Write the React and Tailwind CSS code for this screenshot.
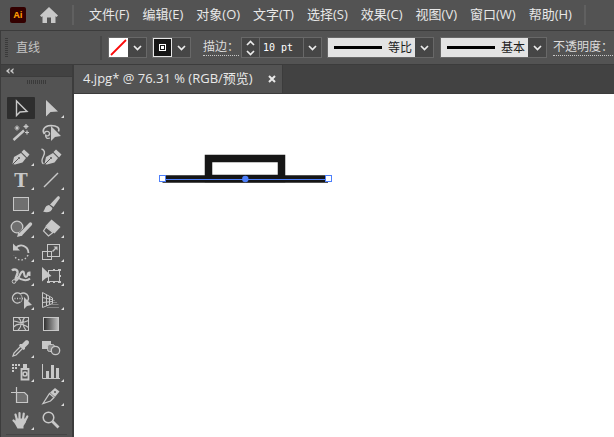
import React, { useState } from 'react'

const FG = '#c8c8c8'

const MENUS = [
  '文件(F)',
  '编辑(E)',
  '对象(O)',
  '文字(T)',
  '选择(S)',
  '效果(C)',
  '视图(V)',
  '窗口(W)',
  '帮助(H)'
]

// Nib shared by the pen and curvature tools
const Nib = () => (
  <>
    <path d="M6.5 20 L8 13 L15 9 L20 14 L16.5 18.5 L9 20.5 Z" fill={FG} stroke="none" />
    <path d="M15.5 8 L18 5.5 L23.5 10.5 L21 13.5 Z" fill={FG} stroke="none" />
    <path d="M7 20 L12.5 14.5" stroke="#535353" />
    <circle cx="13" cy="14" r="1" fill="#535353" stroke="none" />
  </>
)

// Every glyph is drawn on a 30x24 cell
const TOOLS = [
  { name: '选择工具', icon: <path d="M10.5 5 V19.5 L14 16 L21 15.5 Z" strokeWidth="1.4" /> },
  { name: '直接选择工具', more: true, icon: <path d="M10 4 V20.5 L14.5 16 L22 15.5 Z" fill={FG} stroke="none" /> },
  {
    name: '魔棒工具',
    icon: (
      <>
        <path d="M7.5 20 L18 10.5" strokeWidth="2.4" />
        <path d="M11 5.5 V10.5 M8.5 8 H13.5 M20 4 V9 M17.5 6.5 H22.5 M21 10.5 V14.5 M19 12.5 H23" strokeWidth="1.2" />
        <path d="M9.5 6.5 L12.5 9.5 M12.5 6.5 L9.5 9.5 M18.5 5 L21.5 8 M21.5 5 L18.5 8" strokeWidth="0.9" />
      </>
    )
  },
  {
    name: '套索工具',
    icon: (
      <>
        <path d="M8.5 14 C6 11 7 6 15 5.5 C21 5.5 24 8 22.5 11.5" strokeWidth="1.6" />
        <path d="M8.5 14 C8.5 11 12.5 10.5 13.5 13 C14 16 10 17 9.5 14.5 C9.5 18 11 19 14 18" strokeWidth="1.3" />
        <path d="M15 6 V21 L19 17 L25 16 Z" fill={FG} stroke="none" />
      </>
    )
  },
  { name: '钢笔工具', more: true, icon: <Nib /> },
  {
    name: '曲率工具',
    icon: (
      <>
        <g transform="translate(2 0)">
          <Nib />
        </g>
        <path d="M5.5 5 C9 6 9 9 7.5 12 C5.5 16 5 18.5 7.5 20" strokeWidth="1.4" />
      </>
    )
  },
  {
    name: '文字工具',
    more: true,
    icon: (
      <text x="15" y="19" textAnchor="middle" fontSize="18" fontWeight="700" fontFamily="'DejaVu Serif', serif" fill={FG} stroke="none">
        T
      </text>
    )
  },
  { name: '直线段工具', more: true, icon: <path d="M8 19 L22 5" strokeWidth="1.5" /> },
  { name: '矩形工具', more: true, icon: <rect x="7.5" y="5.5" width="15" height="13" fill="#707070" /> },
  {
    name: '画笔工具',
    more: true,
    icon: (
      <>
        <path d="M23 4 L24 6 L17.5 15 L14 12.5 L21.5 4.5 Z" fill={FG} stroke="none" />
        <path d="M13 13 L16.5 16 C16 20 11 21 7 19.5 C9 18.5 8.5 13.5 13 13 Z" fill={FG} stroke="none" />
      </>
    )
  },
  {
    name: 'Shaper 工具',
    more: true,
    icon: (
      <>
        <circle cx="11" cy="11" r="5.8" fill="#707070" strokeWidth="1.3" />
        <path d="M14 19 L25 7.5" strokeWidth="4.6" stroke="#535353" />
        <path d="M15 18 L24.5 8" strokeWidth="3.4" strokeLinecap="round" />
        <path d="M11 21 L12.5 16 L16.5 19.5 Z" fill={FG} stroke="none" />
      </>
    )
  },
  {
    name: '橡皮擦工具',
    more: true,
    icon: (
      <>
        <path d="M15.5 3.5 L24.5 11 L18.5 17.5 L9.5 10 Z" fill={FG} stroke="none" />
        <path d="M10 11 L7.5 15 L12.5 20 L17 16.5 Z" strokeWidth="1.2" />
      </>
    )
  },
  {
    name: '旋转工具',
    more: true,
    icon: (
      <>
        <path d="M9.5 8.5 C14 3 22 5.5 22.5 13" strokeWidth="1.8" />
        <path d="M7 3.5 V10.5 H14 Z" fill={FG} stroke="none" />
        <path d="M22 15 C19 21.5 11 21.5 8 15.5" strokeWidth="1.5" strokeDasharray="1.5 2" />
      </>
    )
  },
  {
    name: '比例缩放工具',
    more: true,
    icon: (
      <>
        <rect x="11.5" y="4.5" width="12" height="12" />
        <rect x="6.5" y="11.5" width="9" height="8" />
        <path d="M16.5 11.5 L20 8" strokeWidth="1.4" />
        <path d="M17.5 6.5 H21.5 V10.5 Z" fill={FG} stroke="none" />
      </>
    )
  },
  {
    name: '宽度工具',
    more: true,
    icon: (
      <>
        <path d="M6 6.5 C8 4.5 12 5.5 11.5 9 C11 12 9 14 9.5 16" strokeWidth="2.4" />
        <path d="M10 16.5 C13 16 13.5 8.5 16.5 7.5 C19 7 17 12.5 20 13 C22.5 13 20.5 8.5 23.5 8.5 V12" strokeWidth="2" />
        <path d="M12 13.5 C15 16 21 17.5 24 14.5" strokeWidth="2" />
        <circle cx="8" cy="17.5" r="1.8" fill="#535353" />
        <path d="M9 16 L15 10" />
      </>
    )
  },
  {
    name: '自由变换工具',
    more: true,
    icon: (
      <>
        <rect x="12.5" y="6.5" width="11" height="11" />
        <path
          d="M17 5 h2 v2 h-2 z M22 5 h3 v2 h-3 z M23 11 h2 v2 h-2 z M22 17 h3 v2 h-3 z M17 17 h2 v2 h-2 z M11 17 h3 v2 h-3 z"
          fill={FG}
          stroke="none"
        />
        <path d="M6 3 V17.5 L10 14 L15.5 12 Z" fill={FG} stroke="none" />
      </>
    )
  },
  {
    name: '形状生成器工具',
    more: true,
    icon: (
      <>
        <path d="M14.5 14 A5 5 0 1 1 14.5 6 A5 5 0 1 1 18 15" strokeWidth="1.4" />
        <path d="M15 7 C16.5 9 16.5 12 15 14" strokeWidth="0.8" />
        <path d="M8.5 10.5 H19" strokeDasharray="1 1.5" strokeWidth="1.5" />
        <path d="M18 9 V21 L21 18 L26 17 Z" fill={FG} stroke="none" />
      </>
    )
  },
  {
    name: '透视网格工具',
    more: true,
    icon: (
      <>
        <path d="M6.5 4.5 V19.5 L16.5 15.5 V10 Z M6.5 9.5 L16 11.5 M6.5 14.5 L16 13.5 M10.5 6.5 V18 M13.5 8.5 V16.5" />
        <path d="M17 12.5 H19 M17 14.5 H21" stroke="#858585" />
        <path d="M16 16.5 H22.5 M11 19.5 H23" stroke="#858585" />
      </>
    )
  },
  {
    name: '网格工具',
    icon: (
      <>
        <rect x="7.5" y="5.5" width="15" height="13" />
        <path
          d="M12.5 5.5 C16 9 16 14 12 18.5 M18.5 5.5 C15.5 9 17 14 20 18.5 M7.5 9 C12 9 13 13 22.5 8.5 M7.5 15 C11 11 16 11 22.5 15.5"
          strokeWidth="1.2"
        />
      </>
    )
  },
  {
    name: '渐变工具',
    icon: (
      <>
        <linearGradient id="toolGradient">
          <stop offset="0" stopColor="#2c2c2c" />
          <stop offset="1" stopColor="#c4c4c4" />
        </linearGradient>
        <rect x="7.5" y="5.5" width="15" height="13" fill="url(#toolGradient)" />
      </>
    )
  },
  {
    name: '吸管工具',
    more: true,
    icon: (
      <>
        <path d="M7 20 L8 17 L15.5 9.5 L17.5 11.5 L10 19 Z" strokeWidth="1.3" />
        <path d="M14 8 L16 8 L19.5 4.5 C22 3.5 24 5.5 22.5 8 L19 11.5 L19 13 L17.5 14 L13 9.5 Z" fill={FG} stroke="none" />
      </>
    )
  },
  {
    name: '混合工具',
    icon: (
      <>
        <rect x="6" y="5" width="9" height="8" fill={FG} stroke="none" />
        <rect x="11.5" y="8.5" width="7" height="7" rx="2" fill="#858585" />
        <circle cx="19.5" cy="14.5" r="4.2" fill="#5d5d5d" strokeWidth="1.3" />
      </>
    )
  },
  {
    name: '符号喷枪工具',
    more: true,
    icon: (
      <>
        <path
          d="M6 4 h2 v2 h-2 z M9 4 h2 v2 h-2 z M12 4 h2 v2 h-2 z M6 7 h2 v2 h-2 z M9 7 h2 v2 h-2 z M6 10 h2 v2 h-2 z M17 4 h4 v4 h-4 z"
          fill={FG}
          stroke="none"
        />
        <path d="M15.5 9 H22.5 V19.5 H15.5 Z" strokeWidth="1.8" />
        <circle cx="19" cy="14" r="2" strokeWidth="1.6" />
      </>
    )
  },
  {
    name: '柱形图工具',
    more: true,
    icon: (
      <>
        <path d="M6.5 4 V18.5 H24" />
        <path d="M10 11 h3 v7 h-3 z M15 5 h3 v13 h-3 z M20 8 h3 v10 h-3 z" fill={FG} stroke="none" />
      </>
    )
  },
  {
    name: '画板工具',
    icon: (
      <>
        <path d="M10.5 8.5 H18.5 L21.5 11.5 V18.5 H10.5 Z" fill="#707070" strokeWidth="1.2" />
        <path d="M5 8.5 H10 M10.5 3 V8" strokeWidth="1.2" />
      </>
    )
  },
  {
    name: '切片工具',
    more: true,
    icon: (
      <>
        <path d="M7 19.5 L13.5 9.5 L18 13.5 L14.5 17 Z" strokeWidth="1.3" />
        <path d="M14 8.5 L19 4 L23.5 7.5 L19 13 Z" fill={FG} stroke="none" />
        <circle cx="19" cy="8" r="1" fill="#535353" stroke="none" />
      </>
    )
  },
  {
    name: '抓手工具',
    more: true,
    icon: (
      <>
        <path d="M11 12 L9.5 6.5 M13.5 11 L13.5 5 M17 11 L17.8 5.5 M19 13 L21.3 8.5 M11.5 16.5 L7.5 12.5" strokeWidth="2.2" strokeLinecap="round" />
        <path d="M10 10.5 H19.5 L20 14 L17.5 18 V20.5 H11.5 L8.5 15 Z" fill={FG} stroke="none" />
      </>
    )
  },
  {
    name: '缩放工具',
    icon: (
      <>
        <circle cx="12.5" cy="9.5" r="5.3" strokeWidth="1.5" />
        <path d="M16.5 13.5 L22.5 19.5" strokeWidth="2.8" />
      </>
    )
  }
]

function Chevron({ up }) {
  return (
    <svg width="9" height="6" viewBox="0 0 9 6" fill="none" stroke="#ececec" strokeWidth="1.7" aria-hidden="true">
      <path d={up ? 'M1 5 L4.5 1.5 L8 5' : 'M1 1 L4.5 4.5 L8 1'} />
    </svg>
  )
}

function Swatch({ label, children }) {
  return (
    <div className="flex h-[21px] shrink-0 border border-[#686868] bg-[#464646]">
      <button aria-label={label} className="flex w-[19px] items-center justify-center">
        {children}
      </button>
      <button aria-label={`${label}选项`} className="flex w-[18px] items-center justify-center">
        <Chevron />
      </button>
    </div>
  )
}

// Drop-down with a sample of the stroke in front of its value
function StrokeSelect({ label, value, options }) {
  return (
    <div className="relative flex h-[21px] w-[107px] shrink-0 border border-[#686868] bg-[#464646]">
      <select
        aria-label={label}
        defaultValue={value}
        className="w-full appearance-none bg-transparent bg-linear-to-r from-[#e3e3e3] from-[87px] to-[#464646] to-[87px] pl-[60px] text-xs text-[#1c1c1c] outline-none"
      >
        {options.map((option) => (
          <option key={option}>{option}</option>
        ))}
      </select>
      <span className="pointer-events-none absolute top-2 left-1.5 h-[3px] w-12 bg-black" />
      <span className="pointer-events-none absolute inset-y-0 right-0 flex w-[18px] items-center justify-center">
        <Chevron />
      </span>
    </div>
  )
}

function MenuBar() {
  return (
    <header className="flex h-[30px] shrink-0 items-center overflow-hidden">
      <svg className="ml-2.5 shrink-0" width="16" height="16" viewBox="0 0 16 16" role="img" aria-label="Ai">
        <rect width="16" height="16" rx="2" fill="#330000" />
        <text x="8" y="11" textAnchor="middle" fontSize="9" fontWeight="700" fontFamily="'Open Sans', sans-serif" fill="#ff9a00">
          Ai
        </text>
      </svg>
      <button aria-label="主页" className="ml-3.5 shrink-0">
        <svg width="18" height="16" viewBox="0 0 18 16" fill="#c8c8c8">
          <path d="M9 0 L18 8.5 L16.5 10 L15.5 9.2 V16 H11 V10.5 H7 V16 H2.5 V9.2 L1.5 10 L0 8.5 Z" />
        </svg>
      </button>
      <span className="ml-3.5 h-5 w-0.5 shrink-0 bg-[#606060]" />
      <nav className="ml-[15px] flex shrink-0 gap-[13px] text-[13px] text-[#e8e8e8]">
        {MENUS.map((menu) => (
          <button key={menu} className="whitespace-nowrap">
            {menu}
          </button>
        ))}
      </nav>
      <span className="ml-3 h-5 w-0.5 shrink-0 bg-[#606060]" />
    </header>
  )
}

function ControlBar() {
  const [weight, setWeight] = useState('10 pt')

  const step = (delta) => setWeight((prev) => `${Math.max(0, parseFloat(prev) + delta)} pt`)

  return (
    <div className="flex h-[35px] shrink-0 items-center overflow-hidden border-y border-l border-[#3c3c3c] text-xs whitespace-nowrap text-[#dcdcdc]">
      <span className="ml-1 h-5 w-[3px] shrink-0 bg-[repeating-linear-gradient(#3a3a3a_0_1px,#535353_1px_2px)]" />
      <span className="ml-2 w-[84px] shrink-0 text-[#c4c4c4]">直线</span>
      <span className="mr-1.5 h-6 w-0.5 shrink-0 bg-[#484848]" />

      <div className="flex shrink-0 gap-[5px]">
        <Swatch label="填色">
          <svg width="19" height="19" viewBox="0 0 19 19">
            <rect width="19" height="19" fill="#fff" />
            <path d="M2 17 L17 2" stroke="#fb0a0a" strokeWidth="1.8" />
          </svg>
        </Swatch>
        <Swatch label="描边颜色">
          <svg width="19" height="19" viewBox="0 0 19 19" shapeRendering="crispEdges">
            <rect x="0.5" y="0.5" width="18" height="18" fill="#161616" stroke="#e6e6e6" />
            <rect x="6.5" y="6.5" width="6" height="6" fill="none" stroke="#fff" />
            <rect x="8" y="8" width="3" height="3" fill="#fff" />
          </svg>
        </Swatch>
      </div>

      <label htmlFor="stroke-weight" className="ml-3 shrink-0 border-b border-dotted border-[#c8c8c8] leading-4">
        描边：
      </label>
      <div className="ml-0.5 flex h-[21px] shrink-0 border border-[#686868] bg-[#464646]">
        <div className="flex w-[18px] flex-col items-center justify-center gap-1 border-r border-[#686868]">
          <button aria-label="增加" onClick={() => step(1)}>
            <Chevron up />
          </button>
          <button aria-label="减少" onClick={() => step(-1)}>
            <Chevron />
          </button>
        </div>
        <input
          id="stroke-weight"
          value={weight}
          onChange={(e) => setWeight(e.target.value)}
          className="w-11 border-r border-[#686868] bg-transparent px-[3px] font-['DejaVu_Sans_Mono',monospace] text-[10px] text-white outline-none"
        />
        <button aria-label="描边粗细选项" className="flex w-[17px] items-center justify-center">
          <Chevron />
        </button>
      </div>

      <div className="ml-[5px] flex shrink-0 gap-1.5">
        <StrokeSelect label="变量宽度配置文件" value="等比" options={['等比', '宽度 1']} />
        <StrokeSelect label="画笔定义" value="基本" options={['基本', '炭笔']} />
      </div>
      <button className="ml-1.5 shrink-0 border-b border-dotted border-[#c8c8c8] leading-4">不透明度：</button>
    </div>
  )
}

function Toolbox() {
  const [active, setActive] = useState('选择工具')

  return (
    <aside className="w-[74px] shrink-0 border-r-2 border-l border-[#3c3c3c]">
      <div className="flex h-3 items-center border-b border-[#3c3c3c] bg-[#424242] pl-[5px]">
        <button aria-label="折叠">
          <svg width="8" height="6" viewBox="0 0 8 6" fill="#c8c8c8">
            <path d="M3.5 0 V2 L2.2 3 L3.5 4 V6 L0 3 Z M7.5 0 V2 L6.2 3 L7.5 4 V6 L4 3 Z" />
          </svg>
        </button>
      </div>
      <div className="flex h-[19px] justify-center pt-[3px]">
        <span className="h-1 w-[19px] bg-[repeating-linear-gradient(90deg,#3a3a3a_0_1px,#535353_1px_2px)]" />
      </div>
      <div className="grid grid-cols-[30px_30px] pl-[5px]">
        {TOOLS.map((tool) => (
          <button key={tool.name} title={tool.name} aria-pressed={active === tool.name} onClick={() => setActive(tool.name)} className="h-6 w-[30px]">
            <svg width="30" height="24" viewBox="0 0 30 24" fill="none" stroke={FG}>
              {active === tool.name && <rect x="1" y="1" width="28" height="22" rx="1" fill="#2e2e2e" stroke="none" />}
              {tool.icon}
              {tool.more && <path d="M28 19 V22 H25 Z" fill="#dcdcdc" stroke="none" />}
            </svg>
          </button>
        ))}
      </div>
      <hr className="mx-[5px] mt-0.5 border-[#454545]" />
    </aside>
  )
}

// Open document: a frame with the selected 10 pt line over it
function Artwork() {
  return (
    <svg className="mt-[58px] ml-[84px]" width="176" height="34" viewBox="158 152 176 34" fill="none">
      <rect x="208.5" y="158.5" width="73" height="20" stroke="#161616" strokeWidth="7.5" />
      <path d="M162.5 179 H328" stroke="#161616" strokeWidth="7.5" />
      <path d="M165 179.5 H326" stroke="#4d7ffb" />
      <circle cx="245.3" cy="179" r="3.2" fill="#4d7ffb" />
      <rect x="159.5" y="175.5" width="6" height="6" fill="#fff" stroke="#4d7ffb" />
      <rect x="325.5" y="175.5" width="6" height="6" fill="#fff" stroke="#4d7ffb" />
    </svg>
  )
}

function App() {
  return (
    <div className="flex min-h-screen flex-col bg-[#535353] font-['Open_Sans','Noto_Sans_CJK_SC',sans-serif]">
      <MenuBar />
      <ControlBar />
      <div className="flex flex-1">
        <Toolbox />
        <div className="flex min-w-0 flex-1 flex-col">
          <div className="flex h-[29px] shrink-0 border-b border-[#3c3c3c] bg-[#424242]">
            <div className="flex items-center border-r border-[#3c3c3c] bg-[#535353] pr-1.5 pl-[9px] text-[#e8e8e8]">
              <button className="text-[13px] whitespace-nowrap">4.jpg* @ 76.31 % (RGB/预览)</button>
              <button aria-label="关闭" className="ml-[15px]">
                <svg width="8" height="8" viewBox="0 0 8 8" stroke="#e8e8e8" strokeWidth="2">
                  <path d="M1 1 L7 7 M7 1 L1 7" />
                </svg>
              </button>
            </div>
          </div>
          <main className="flex-1 overflow-hidden bg-white">
            <Artwork />
          </main>
        </div>
      </div>
    </div>
  )
}

export default App
